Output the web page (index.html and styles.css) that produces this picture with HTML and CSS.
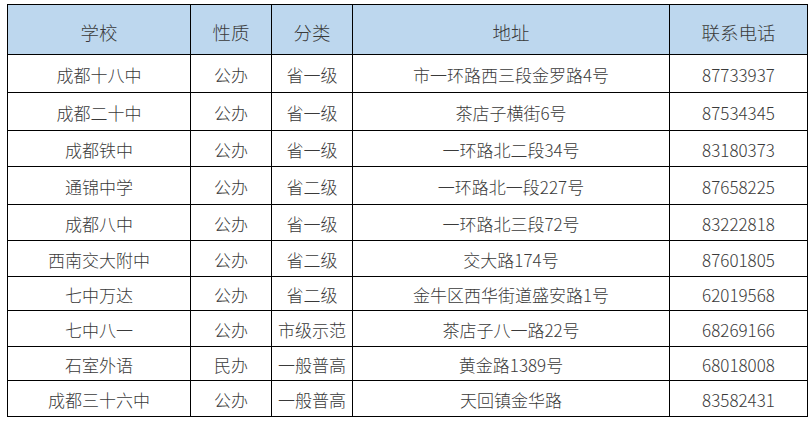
FILE: index.html
```html
<!DOCTYPE html>
<html lang="zh-CN">
<head>
<meta charset="utf-8">
<link rel="stylesheet" href="styles.css">
</head>
<body>
<table class="schools">
  <colgroup>
    <col class="c-name"><col class="c-type"><col class="c-level"><col class="c-addr"><col class="c-tel">
  </colgroup>
  <thead>
    <tr><th>学校</th><th>性质</th><th>分类</th><th>地址</th><th>联系电话</th></tr>
  </thead>
  <tbody>
    <tr><td>成都十八中</td><td>公办</td><td>省一级</td><td>市一环路西三段金罗路4号</td><td>87733937</td></tr>
    <tr><td>成都二十中</td><td>公办</td><td>省一级</td><td>茶店子横街6号</td><td>87534345</td></tr>
    <tr><td>成都铁中</td><td>公办</td><td>省一级</td><td>一环路北二段34号</td><td>83180373</td></tr>
    <tr><td>通锦中学</td><td>公办</td><td>省二级</td><td>一环路北一段227号</td><td>87658225</td></tr>
    <tr><td>成都八中</td><td>公办</td><td>省一级</td><td>一环路北三段72号</td><td>83222818</td></tr>
    <tr><td>西南交大附中</td><td>公办</td><td>省二级</td><td>交大路174号</td><td>87601805</td></tr>
    <tr><td>七中万达</td><td>公办</td><td>省二级</td><td>金牛区西华街道盛安路1号</td><td>62019568</td></tr>
    <tr><td>七中八一</td><td>公办</td><td>市级示范</td><td>茶店子八一路22号</td><td>68269166</td></tr>
    <tr><td>石室外语</td><td>民办</td><td>一般普高</td><td>黄金路1389号</td><td>68018008</td></tr>
    <tr><td>成都三十六中</td><td>公办</td><td>一般普高</td><td>天回镇金华路</td><td>83582431</td></tr>
  </tbody>
</table>
</body>
</html>
```
FILE: styles.css
```css
html, body {
  margin: 0;
  padding: 0;
  background: #ffffff;
}
body {
  padding: 4px 0 0 7px;
  font-family: "Noto Sans CJK SC", "Noto Sans", sans-serif;
  color: #3a3a3a;
}
.schools {
  border-collapse: collapse;
  table-layout: fixed;
  width: 800px;
}
.c-name { width: 183px; }
.c-type { width: 81px; }
.c-level { width: 81px; }
.c-addr { width: 317px; }
.c-tel { width: 138px; }
.schools th, .schools td {
  border: 1.5px solid #000000;
  padding: 0;
  text-align: center;
  vertical-align: middle;
  font-weight: 300;
  white-space: nowrap;
  overflow: hidden;
  line-height: 20px;
}
.schools th {
  background: #bdd7ee;
  font-size: 18.5px;
  padding-top: 4px;
}
.schools td {
  font-size: 17px;
  padding-top: 2px;
}
.schools thead tr { height: 50px; }
.schools tbody tr { height: 36px; }
.schools tbody tr:nth-child(1) { height: 38px; }
.schools tbody tr:nth-child(2) { height: 38px; }
.schools tbody tr:nth-child(4) { height: 38px; }
.schools tbody tr:nth-child(7) { height: 34px; }
.schools tbody tr:nth-child(9) { height: 34px; }
```
